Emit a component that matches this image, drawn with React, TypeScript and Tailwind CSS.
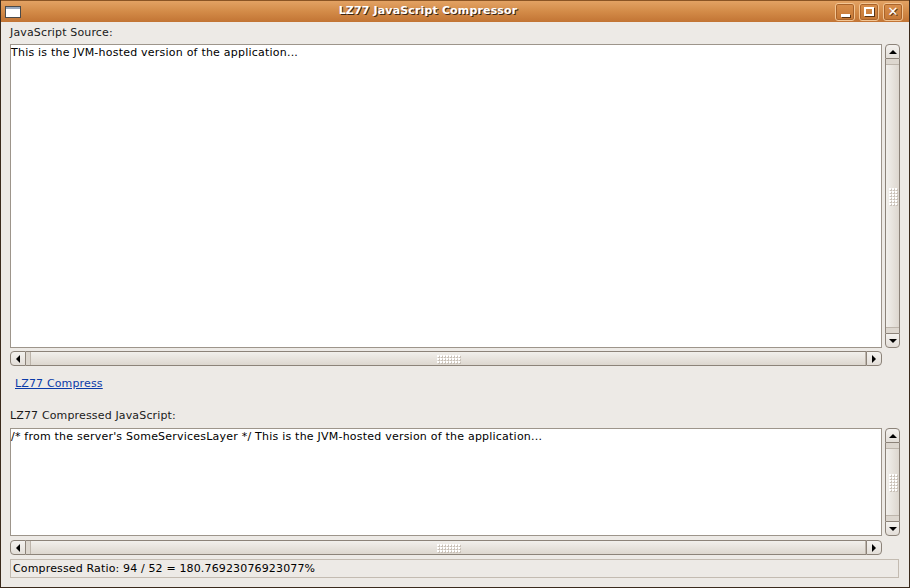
import React from 'react';

// Swing/GTK (Ubuntu Human) look for the LZ77 compressor demo window
const FONT = "font-['DejaVu_Sans','Liberation_Sans',sans-serif]";

const Grip = ({ vertical }: { vertical?: boolean }) => (
  <div className={`grid gap-[1px] ${vertical ? 'grid-cols-3' : 'grid-cols-6'}`}>
    {Array.from({ length: 18 }).map((_, i) => (
      <span key={i} className="w-[2px] h-[2px] bg-white shadow-[1px_1px_0_#c9c1b8]" />
    ))}
  </div>
);

const ArrowBtn = ({ dir }: { dir: 'up' | 'down' | 'left' | 'right' }) => {
  const tri =
    dir === 'up'
      ? 'border-x-[4px] border-x-transparent border-b-[4px] border-b-black'
      : dir === 'down'
      ? 'border-x-[4px] border-x-transparent border-t-[4px] border-t-black'
      : dir === 'left'
      ? 'border-y-[4px] border-y-transparent border-r-[4px] border-r-black'
      : 'border-y-[4px] border-y-transparent border-l-[4px] border-l-black';
  const round =
    dir === 'up'
      ? 'rounded-t-[4px] h-[15px] w-full'
      : dir === 'down'
      ? 'rounded-b-[4px] h-[15px] w-full'
      : dir === 'left'
      ? 'rounded-l-[4px] w-[16px] h-full'
      : 'rounded-r-[4px] w-[16px] h-full';
  return (
    <div className={`${round} shrink-0 flex items-center justify-center bg-gradient-to-b from-[#f4f2ef] to-[#e3ded8] border border-[#8c8379]`}>
      <span className={`w-0 h-0 ${tri}`} />
    </div>
  );
};

const VScroll = () => (
  <div className="w-[15px] h-full flex flex-col">
    <ArrowBtn dir="up" />
    <div className="flex-1 bg-[#ddd7cf] border-x border-[#8c8379] py-[5px] flex">
      <div className="flex-1 bg-gradient-to-r from-[#f2f0ec] to-[#ddd7cf] border-y border-[#bdb5ab] flex items-center justify-center">
        <Grip vertical />
      </div>
    </div>
    <ArrowBtn dir="down" />
  </div>
);

const HScroll = () => (
  <div className="w-[872px] h-[15px] flex">
    <ArrowBtn dir="left" />
    <div className="flex-1 bg-[#ddd7cf] border-y border-[#8c8379] pl-[4px] flex">
      <div className="flex-1 bg-gradient-to-b from-[#f2f0ec] to-[#ddd7cf] border-x border-[#bdb5ab] flex items-center justify-center">
        <div className="grid grid-cols-8 gap-[1px]">
          {Array.from({ length: 24 }).map((_, i) => (
            <span key={i} className="w-[2px] h-[2px] bg-white shadow-[1px_1px_0_#c9c1b8]" />
          ))}
        </div>
      </div>
    </div>
    <ArrowBtn dir="right" />
  </div>
);

const TextArea = ({ text, height }: { text: string; height: string }) => (
  <div className={`flex gap-[3px] ${height}`}>
    <div className="w-[872px] h-full bg-white border border-[#9d958b] pt-[1px] text-[11px] leading-[14px] tracking-[0.22px] text-black whitespace-pre">
      {text}
    </div>
    <VScroll />
  </div>
);

const TitleBtn = ({ children }: { children: React.ReactNode }) => (
  <div className="w-[20px] h-[18px] rounded-[3px] border border-[#f3c593] bg-gradient-to-b from-[#d98f4c] to-[#c57734] shadow-[inset_0_0_0_1px_#a9632a] flex items-center justify-center">
    {children}
  </div>
);

export default function App() {
  return (
    <div className={`w-[910px] h-[588px] flex flex-col bg-[#edeae6] border-x border-b border-[#3a2a1c] tracking-[0.15px] ${FONT}`}>
      {/* title bar */}
      <div className="h-[22px] shrink-0 flex items-center bg-gradient-to-b from-[#e3a263] via-[#d38b48] to-[#c27434] border-t border-[#8a5424]">
        <div className="ml-[4px] w-[16px] h-[12px] bg-white border border-[#4a4a4a] shadow-[inset_0_2px_0_#9aa9bf]" />
        <div className="flex-1 text-center text-[11px] font-bold text-white [text-shadow:1px_1px_0_#3a2414]">
          LZ77 JavaScript Compressor
        </div>
        <div className="flex gap-[4px] mr-[6px]">
          <TitleBtn>
            <span className="mt-[7px] w-[9px] h-[3px] bg-white shadow-[1px_1px_0_#5a3414]" />
          </TitleBtn>
          <TitleBtn>
            <span className="w-[10px] h-[9px] border-2 border-white shadow-[1px_1px_0_#5a3414]" />
          </TitleBtn>
          <TitleBtn>
            <span className="text-white font-bold text-[13px] leading-none [text-shadow:1px_1px_0_#5a3414]">✕</span>
          </TitleBtn>
        </div>
      </div>

      {/* content */}
      <div className="flex-1 flex flex-col pl-[9px] text-[11px] text-[#1a1a1a]">
        <div className="h-[20px] pt-[2px] flex items-center">JavaScript Source:</div>
        <div className="mt-[2px]">
          <TextArea text="This is the JVM-hosted version of the application..." height="h-[304px]" />
        </div>
        <div className="mt-[3px]">
          <HScroll />
        </div>
        <div className="mt-[7px] h-[20px] pt-[2px] flex items-center pl-[5px]">
          <span className="text-[#0a3aa8] underline">LZ77 Compress</span>
        </div>
        <div className="mt-[12px] h-[20px] pt-[2px] flex items-center">LZ77 Compressed JavaScript:</div>
        <div className="mt-[3px]">
          <TextArea
            text="/* from the server's SomeServicesLayer */ This is the JVM-hosted version of the application..."
            height="h-[108px]"
          />
        </div>
        <div className="mt-[4px]">
          <HScroll />
        </div>
        <div className="mt-[4px] w-[889px] h-[19px] border border-[#c3bbb1] flex items-center pl-[2px] pt-[2px] text-black">
          Compressed Ratio: 94 / 52 = 180.76923076923077%
        </div>
      </div>
    </div>
  );
}
